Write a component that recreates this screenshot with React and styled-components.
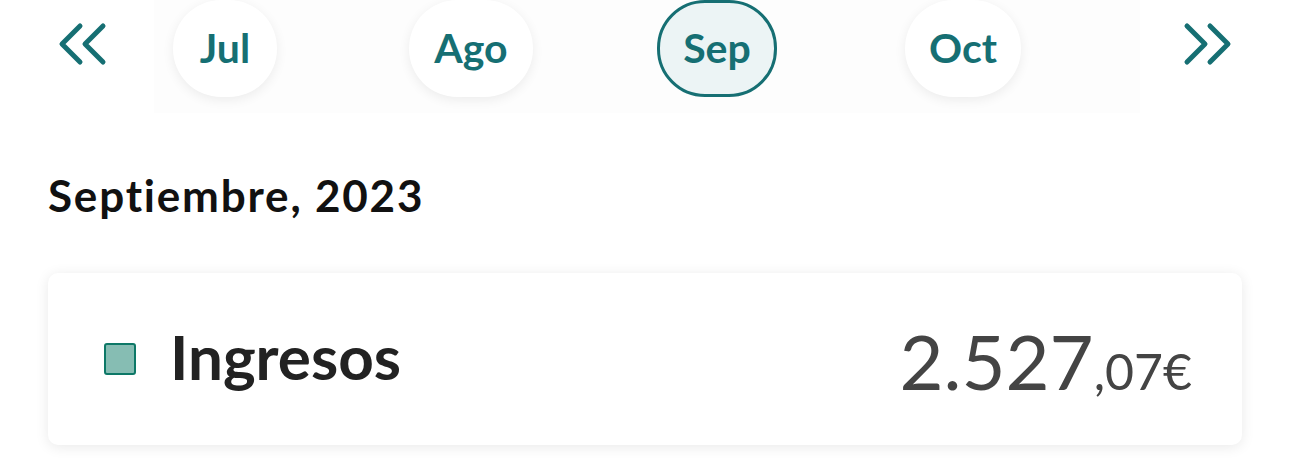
import React from "react";
import styled, { createGlobalStyle } from "styled-components";

const Global = createGlobalStyle`
  html, body { margin: 0; padding: 0; background: #ffffff; }
  body { font-family: Lato, "Noto Sans", sans-serif; font-variant-ligatures: none; }
  * { box-sizing: border-box; }
`;

const TEAL = "#166f73";

const Page = styled.div`
  width: 1290px;
  height: 473px;
  overflow: hidden;
  background: #fff;
`;

const Nav = styled.div`
  display: flex;
  align-items: flex-start;
  height: 113px;
`;

const Arrow = styled.button`
  flex: 0 0 ${(p) => p.$w}px;
  height: 90px;
  border: 0;
  background: transparent;
  padding: 22px 0 0 ${(p) => p.$pad}px;
  display: flex;
  justify-content: flex-start;
  cursor: pointer;
  svg { display: block; }
`;

const Viewport = styled.div`
  flex: 1;
  height: 113px;
  overflow: hidden;
  background: #fdfdfd;
`;

const Track = styled.div`
  display: flex;
  margin-left: -52px;
`;

const Slot = styled.div`
  flex: 0 0 246px;
  display: flex;
  justify-content: center;
`;

const Pill = styled.div`
  height: 97px;
  padding: 0 ${(p) => p.$px}px 2px;
  border-radius: 48px;
  display: flex;
  align-items: center;
  justify-content: center;
  font-family: Lato, "Noto Sans", sans-serif;
  font-weight: 700;
  font-size: 41px;
  color: ${TEAL};
  background: ${(p) => (p.$active ? "#ecf4f5" : "#ffffff")};
  border: ${(p) => (p.$active ? `3px solid ${TEAL}` : "3px solid transparent")};
  box-shadow: ${(p) => (p.$active ? "none" : "0 3px 12px rgba(0,0,0,0.07)")};
`;

const Title = styled.h2`
  margin: 56px 0 0 48px;
  font-family: Lato, "Noto Sans", sans-serif;
  font-weight: 700;
  font-size: 44px;
  letter-spacing: 1.8px;
  line-height: 52px;
  color: #111;
`;

const Card = styled.div`
  margin: 52px 48px 0 48px;
  height: 172px;
  border-radius: 10px;
  background: #fff;
  box-shadow: 0 2px 14px rgba(0,0,0,0.09);
  display: flex;
  align-items: center;
  padding: 0 50px 0 56px;
`;

const Swatch = styled.span`
  width: 32px;
  height: 32px;
  border-radius: 3px;
  background: #86bdb3;
  border: 2px solid #0d7867;
  flex: 0 0 auto;
`;

const Label = styled.span`
  margin-left: 34px;
  font-family: Lato, "Noto Sans", sans-serif;
  font-weight: 700;
  font-size: 62px;
  color: #222;
  flex: 1;
  padding-bottom: 6px;
`;

const Amount = styled.span`
  font-family: Lato, "Noto Sans", sans-serif;
  font-weight: 400;
  color: #444;
  font-size: 76px;
  padding-top: 2px;
`;

const Cents = styled.span`
  font-size: 50px;
`;

const Chevrons = ({ dir }) => (
  <svg width="52" height="44" viewBox="0 0 52 44" fill="none" stroke={TEAL} strokeWidth="5" strokeLinecap="round" strokeLinejoin="round">
    {dir === "left" ? (
      <>
        <path d="M22 4 L4 22 L22 40" />
        <path d="M45 4 L27 22 L45 40" />
      </>
    ) : (
      <>
        <path d="M7 4 L25 22 L7 40" />
        <path d="M30 4 L48 22 L30 40" />
      </>
    )}
  </svg>
);

const months = [
  { label: "Jul", px: 24 },
  { label: "Ago", px: 22 },
  { label: "Sep", px: 23, active: true },
  { label: "Oct", px: 21 },
];

export default function App() {
  return (
    <Page>
      <Global />
      <Nav>
        <Arrow $w={154} $pad={58} aria-label="anterior">
          <Chevrons dir="left" />
        </Arrow>
        <Viewport>
          <Track>
            {months.map((m) => (
              <Slot key={m.label}>
                <Pill $active={m.active} $px={m.px}>{m.label}</Pill>
              </Slot>
            ))}
          </Track>
        </Viewport>
        <Arrow $w={150} $pad={40} aria-label="siguiente">
          <Chevrons dir="right" />
        </Arrow>
      </Nav>
      <Title>Septiembre, 2023</Title>
      <Card>
        <Swatch />
        <Label>Ingresos</Label>
        <Amount>
          2.527<Cents>,07€</Cents>
        </Amount>
      </Card>
    </Page>
  );
}
